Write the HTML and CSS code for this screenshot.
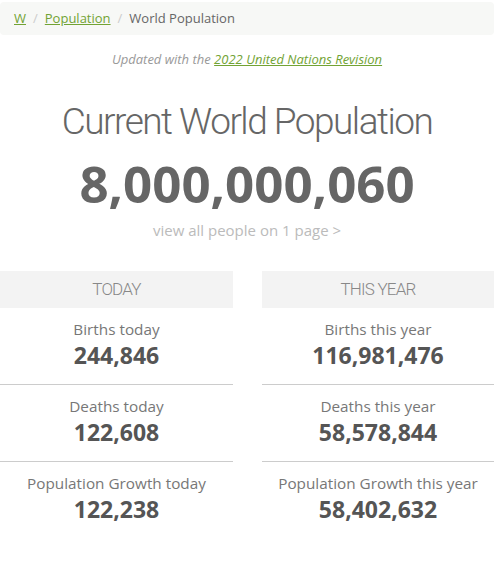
FILE: index.html
```html
<!DOCTYPE html>
<html lang="en">
<head>
<meta charset="utf-8">
<title>World Population Clock</title>
<link rel="stylesheet" href="styles.css">
</head>
<body>
<div class="page">
  <div class="crumbs">
    <a href="#">W</a><span class="sep">/</span><a href="#">Population</a><span class="sep">/</span><span class="here">World Population</span>
  </div>

  <p class="updated">Updated with the <a href="#">2022 United Nations Revision</a></p>

  <h1 class="title">Current World Population</h1>
  <div class="counter">8,000,000,060</div>
  <p class="all-people"><a href="#">view all people on 1 page &gt;</a></p>

  <div class="stats">
    <div class="col">
      <div class="col-head">TODAY</div>
      <div class="stat">
        <div class="label">Births today</div>
        <div class="num">244,846</div>
      </div>
      <div class="stat">
        <div class="label">Deaths today</div>
        <div class="num">122,608</div>
      </div>
      <div class="stat">
        <div class="label">Population Growth today</div>
        <div class="num">122,238</div>
      </div>
    </div>
    <div class="col">
      <div class="col-head">THIS YEAR</div>
      <div class="stat">
        <div class="label">Births this year</div>
        <div class="num">116,981,476</div>
      </div>
      <div class="stat">
        <div class="label">Deaths this year</div>
        <div class="num">58,578,844</div>
      </div>
      <div class="stat">
        <div class="label">Population Growth this year</div>
        <div class="num">58,402,632</div>
      </div>
    </div>
  </div>
</div>
</body>
</html>
```

FILE: styles.css
```css
body {
	margin		: 0;
	background-color: white;
	font-family	: "Open Sans", "Liberation Sans", sans-serif;
	color		: #555;
}
.page {
	width		: 494px;
	padding-top	: 2px;
}
A {	color		: #72a334; }

/* breadcrumb */
.crumbs {
	background	: #f7f8f6;
	border-radius	: 4px;
	height		: 33px;
	line-height	: 33px;
	padding-left	: 14px;
	font-size	: 13px;
}
.crumbs .sep {
	color		: #ccc;
	padding		: 0 7px;
}
.crumbs .here {	color		: #666; }

.updated {
	margin		: 15px 0 0;
	text-align	: center;
	font-size	: 13px;
	font-style	: italic;
	color		: #999;
}

/* big clock */
.title {
	margin		: 31px 0 0;
	text-align	: center;
	font-family	: Roboto, sans-serif;
	font-weight	: 300;
	font-size	: 37px;
	letter-spacing	: -1.5px;
	line-height	: 46px;
	color		: #666;
}
.counter {
	margin-top	: 6px;
	text-align	: center;
	font-weight	: 700;
	font-size	: 51px;
	line-height	: 64px;
	color		: #666;
}
.all-people {
	margin		: 3px 0 0;
	text-align	: center;
	font-size	: 15px;
	line-height	: 24px;
}
.all-people A {
	color		: #bbb;
	text-decoration	: none;
}

/* today / this year */
.stats {
	display		: grid;
	grid-template-columns: 233px 232px;
	column-gap	: 29px;
	margin-top	: 29px;
}
.col-head {
	background	: #f3f3f3;
	text-align	: center;
	font-family	: Roboto, sans-serif;
	font-weight	: 300;
	font-size	: 17px;
	letter-spacing	: -0.8px;
	line-height	: 37px;
	color		: #888;
}
.stat {
	text-align	: center;
	padding		: 10px 0 14px;
	border-bottom	: 1px solid #ccc;
}
.stat:last-child { border-bottom: none; }
.label {
	font-size	: 15.3px;
	line-height	: 22px;
	color		: #777;
}
.num {
	font-weight	: 700;
	font-size	: 23px;
	line-height	: 30px;
	color		: #555;
}
```
